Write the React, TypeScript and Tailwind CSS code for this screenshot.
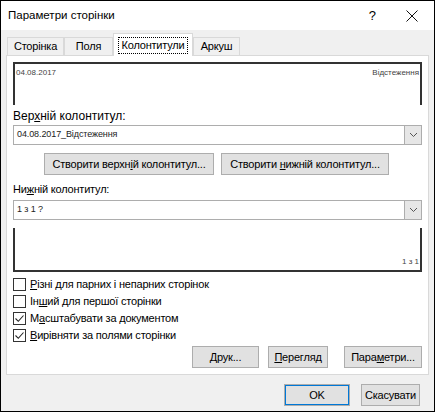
import React from "react";

const font = { fontFamily: '"Liberation Sans", Arial, sans-serif' };

function Chevron() {
  return (
    <svg width="9" height="6" viewBox="0 0 9 6" fill="none">
      <path d="M1 1l3.5 3.5L8 1" stroke="#555" strokeWidth="1" />
    </svg>
  );
}

function Combo({ value }: { value: string }) {
  return (
    <div className="flex h-[20px] items-stretch border border-[#adadad] bg-white">
      <div className="flex flex-1 items-center pl-[3px] text-[9px] tracking-[-0.1px] text-[#222]">{value}</div>
      <div className="flex w-[17px] items-center justify-center border-l border-[#adadad] bg-[#e6e6e6]">
        <Chevron />
      </div>
    </div>
  );
}

function Btn({ children, className = "" }: { children: React.ReactNode; className?: string }) {
  return (
    <div
      className={
        "flex h-[22px] items-center justify-center border border-[#adadad] bg-[#e1e1e1] text-[11px] tracking-[-0.2px] text-black " +
        className
      }
    >
      <span className="whitespace-nowrap">{children}</span>
    </div>
  );
}

function Check({ checked, children }: { checked?: boolean; children: React.ReactNode }) {
  return (
    <div className="flex h-[17px] items-center gap-[4px]">
      <div className="flex h-[13px] w-[13px] items-center justify-center border border-[#333] bg-white">
        {checked && (
          <svg width="11" height="11" viewBox="0 0 11 11" fill="none">
            <path d="M1.5 5.5l2.8 2.8L9.5 2.5" stroke="#222" strokeWidth="1.1" />
          </svg>
        )}
      </div>
      <span className="whitespace-nowrap text-[11px] tracking-[-0.2px] text-black">{children}</span>
    </div>
  );
}

function Tab({ label, active, width }: { label: string; active?: boolean; width: string }) {
  if (active) {
    return (
      <div className={"relative z-10 -mb-px flex h-[23px] items-center justify-center border border-b-0 border-[#d9d9d9] bg-white " + width}>
        <span className="border border-dotted border-black px-[3px] text-[11px] leading-[15px] tracking-[-0.2px] text-black">
          {label}
        </span>
      </div>
    );
  }
  return (
    <div
      className={
        "flex h-[18px] items-center justify-center border border-b-0 border-[#d9d9d9] bg-[#f0f0f0] text-[11px] tracking-[-0.2px] text-black " +
        width
      }
    >
      {label}
    </div>
  );
}

export default function App() {
  return (
    <div style={font} className="flex h-[412px] w-[435px] flex-col border border-black bg-[#f0f0f0]">
      <div className="flex h-[29px] items-center bg-white pl-[7px]">
        <span className="flex-1 text-[11.5px] text-black">Параметри сторінки</span>
        <span className="mr-[30px] text-[13px] text-black">?</span>
        <svg width="12" height="12" viewBox="0 0 12 12" className="mr-[16px]">
          <path d="M0.5 0.5l11 11M11.5 0.5l-11 11" stroke="#111" strokeWidth="1" />
        </svg>
      </div>

      <div className="mt-[3px] flex items-end pl-[6px]">
        <Tab label="Сторінка" width="w-[57px]" />
        <Tab label="Поля" width="w-[49px]" />
        <Tab label="Колонтитули" width="w-[80px]" active />
        <Tab label="Аркуш" width="w-[47px]" />
      </div>

      <div className="mx-[5px] flex h-[320px] flex-col border border-[#d9d9d9] bg-white px-[6px]">
        <div className="mt-[6px] flex h-[43px] justify-between border-2 border-b-0 border-[#333] bg-white px-[1px] pt-[3px] text-[8px] text-[#444]">
          <span>04.08.2017</span>
          <span>Відстеження</span>
        </div>

        <div className="mt-[3px] h-[17px] text-[12px] leading-[17px] text-black">
          Вер<u>х</u>ній колонтитул:
        </div>
        <Combo value="04.08.2017_Відстеження" />

        <div className="mt-[8px] flex justify-center gap-[7px] pr-[2px]">
          <Btn className="w-[170px]">
            Створити верхн<u>і</u>й колонтитул...
          </Btn>
          <Btn className="w-[168px]">
            Створити <u>н</u>ижній колонтитул...
          </Btn>
        </div>

        <div className="mt-[6px] h-[17px] text-[11px] leading-[17px] tracking-[-0.2px] text-black">
          Ни<u>ж</u>ній колонтитул:
        </div>
        <div className="mt-[2px]">
          <Combo value="1 з 1 ?" />
        </div>

        <div className="mt-[8px] flex h-[44px] items-end justify-end border-2 border-t-0 border-[#333] bg-white pb-[2px] pr-[1px] text-[8px] text-[#444]">
          1 з 1
        </div>

        <div className="mt-[4px] flex flex-col">
          <Check>
            <u>Р</u>ізні для парних і непарних сторінок
          </Check>
          <Check>
            Ін<u>ш</u>ий для першої сторінки
          </Check>
          <Check checked>
            М<u>а</u>сштабувати за документом
          </Check>
          <Check checked>
            <u>В</u>ирівняти за полями сторінки
          </Check>
        </div>

        <div className="mt-[2px] flex justify-end">
          <Btn className="w-[67px]">
            <u>Д</u>рук...
          </Btn>
          <Btn className="ml-[9px] w-[60px]">
            <u>П</u>ерегляд
          </Btn>
          <Btn className="ml-[16px] w-[78px]">
            Пара<u>м</u>етри...
          </Btn>
        </div>
      </div>

      <div className="mt-[9px] flex justify-end pr-[14px]">
        <Btn className="w-[66px] border-[#0078d7] outline outline-1 outline-[#0078d7] -outline-offset-2">OK</Btn>
        <Btn className="ml-[11px] w-[59px]">Скасувати</Btn>
      </div>
    </div>
  );
}
